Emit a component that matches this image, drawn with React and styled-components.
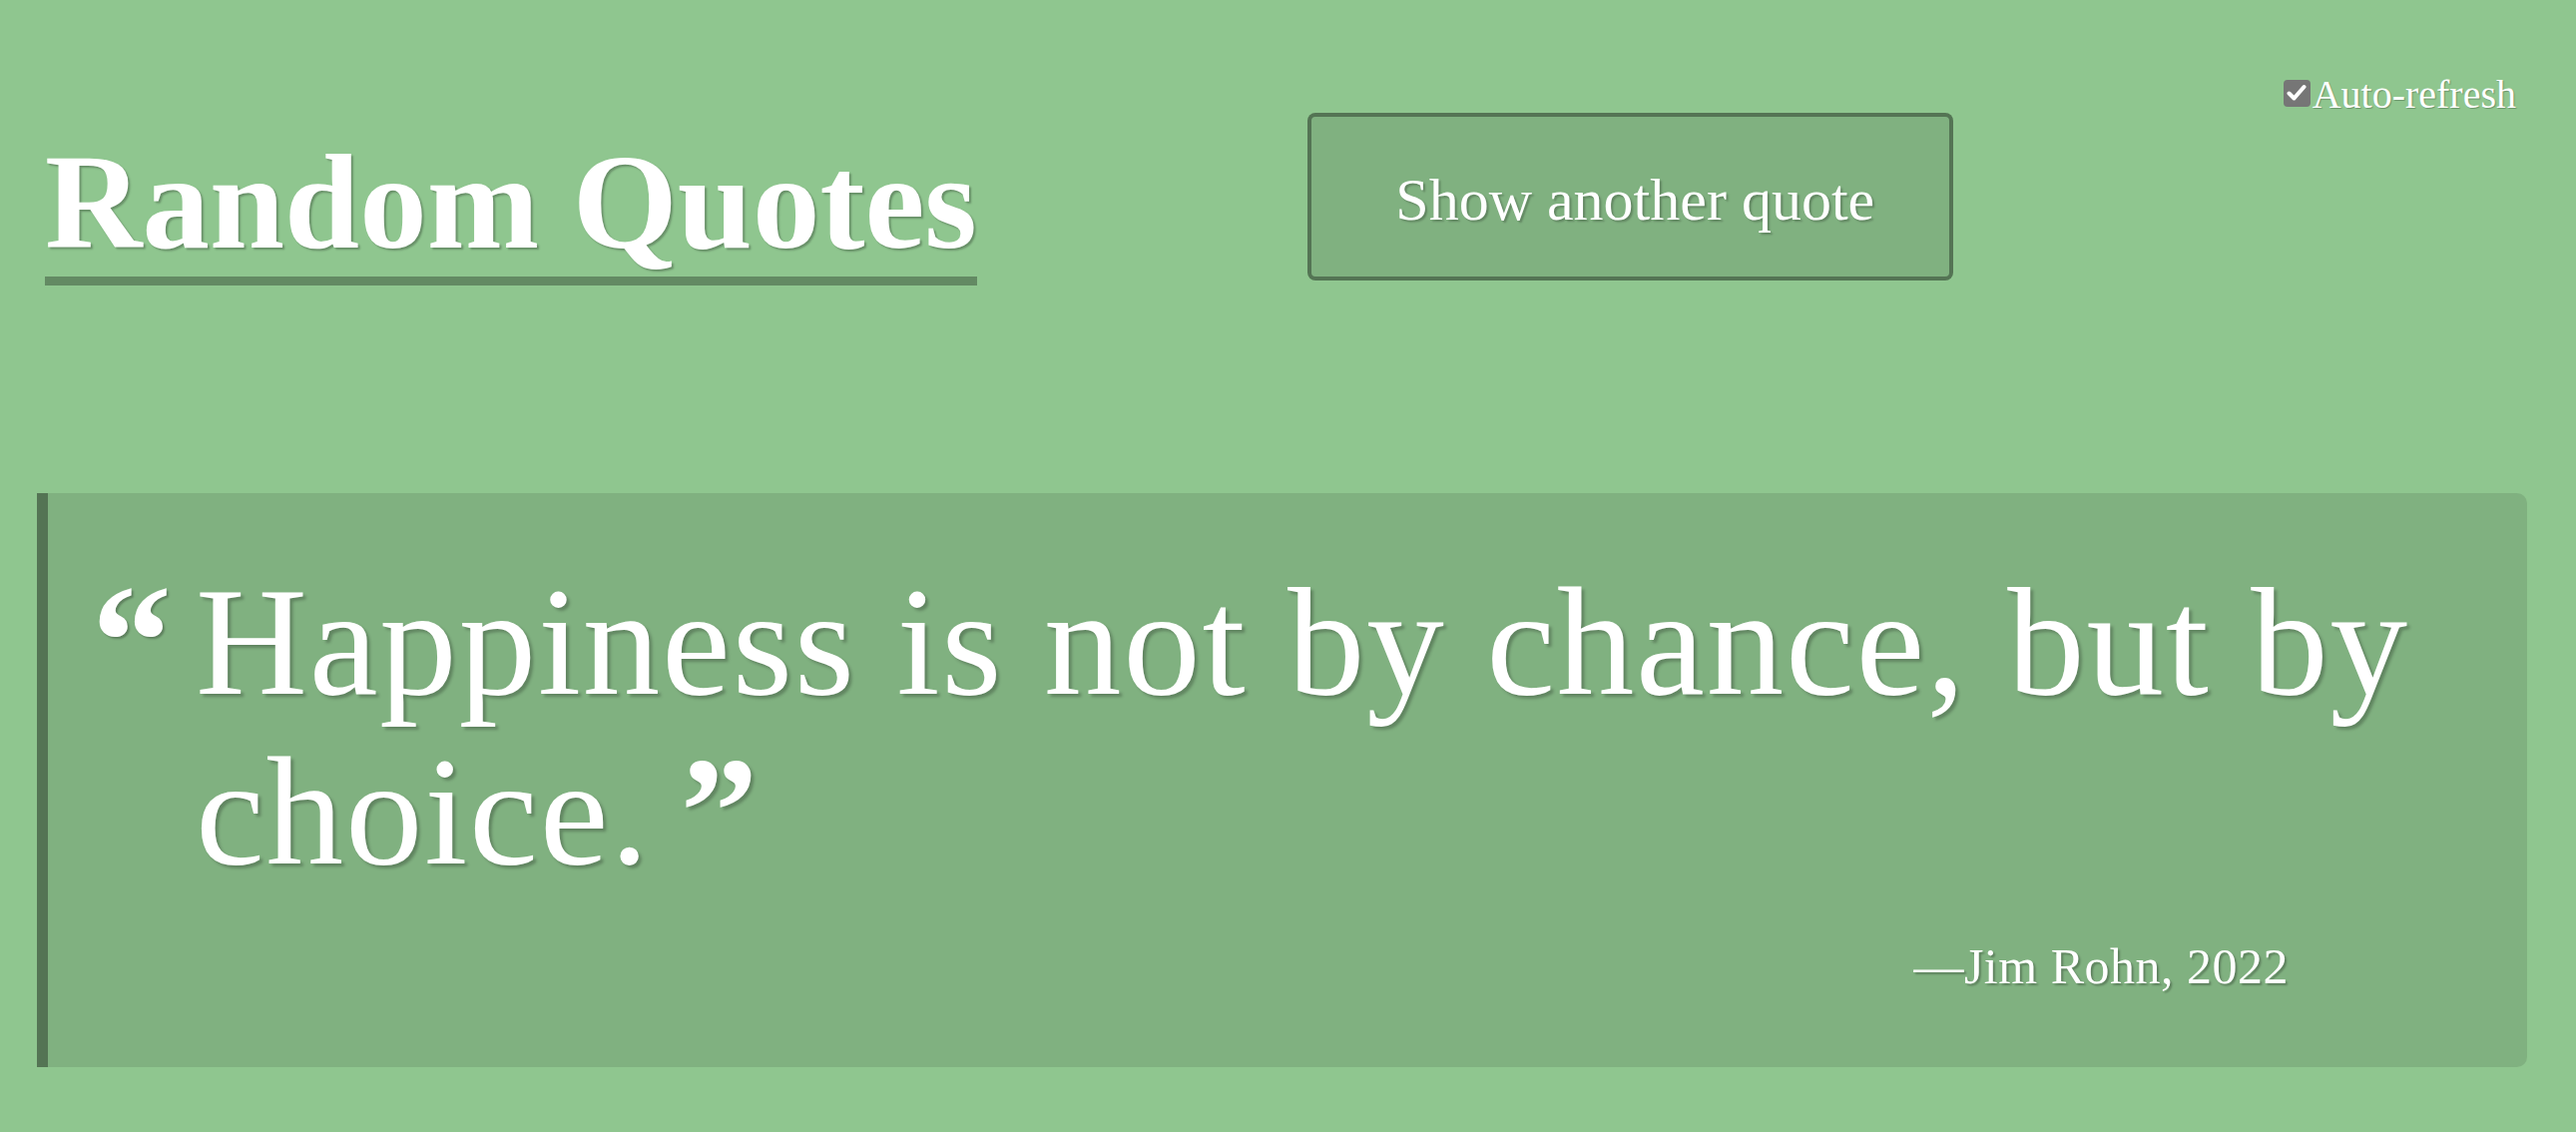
import React from "react";
import styled, { createGlobalStyle } from "styled-components";

const Global = createGlobalStyle`
  html, body { margin: 0; padding: 0; }
  body {
    background: #8fc68f;
    font-family: "Liberation Serif", "Times New Roman", serif;
    color: #ffffff;
    min-height: 1134px;
  }
`;

const Page = styled.div`
  width: 2581px;
  min-height: 1134px;
  box-sizing: border-box;
  padding: 0 49px 0 37px;
`;

const Header = styled.header`
  display: flex;
  justify-content: space-between;
  align-items: flex-start;
  padding: 0 11px 0 8px;
  height: 494px;
`;

const Title = styled.h1`
  margin: 136px 0 0 0;
  font-size: 135px;
  line-height: 134px;
  font-weight: 700;
  padding-bottom: 7px;
  border-bottom: 9px solid rgba(0, 0, 0, 0.3);
  text-shadow: 2px 2px 2px rgba(0, 0, 0, 0.28);
  white-space: nowrap;
`;

const Button = styled.button`
  margin-top: 113px;
  width: 647px;
  height: 168px;
  box-sizing: border-box;
  padding: 6px 0 0 10px;
  background: rgba(0, 0, 0, 0.1);
  border: 4px solid rgba(0, 0, 0, 0.35);
  border-radius: 8px;
  color: #fff;
  font-family: inherit;
  font-size: 60px;
  text-shadow: 2px 2px 2px rgba(0, 0, 0, 0.25);
  cursor: pointer;
`;

const Toggle = styled.label`
  margin-top: 72px;
  display: flex;
  align-items: center;
  font-size: 40px;
  line-height: 46px;
  text-shadow: 1px 1px 1px rgba(0, 0, 0, 0.25);
  white-space: nowrap;
`;

const Box = styled.span`
  width: 27px;
  height: 27px;
  border-radius: 4px;
  background: #767676;
  display: inline-flex;
  align-items: center;
  justify-content: center;
  margin-right: 2px;
  margin-top: -4px;
`;

const Card = styled.section`
  background: rgba(0, 0, 0, 0.1);
  border-left: 11px solid rgba(0, 0, 0, 0.35);
  border-radius: 0 10px 10px 0;
  padding: 64px 40px 72px 44px;
  height: 575px;
  box-sizing: border-box;
`;

const QuoteRow = styled.blockquote`
  margin: 0;
  display: flex;
  align-items: flex-start;
`;

const OpenMark = styled.span`
  flex: 0 0 104px;
  font-size: 160px;
  line-height: 170px;
  font-weight: 700;
  text-shadow: 2px 2px 2px rgba(0, 0, 0, 0.28);
`;

const QuoteText = styled.p`
  margin: 0;
  font-size: 155px;
  line-height: 170px;
  letter-spacing: 1.8px;
  text-shadow: 3px 3px 3px rgba(0, 0, 0, 0.25);

  &::after {
    content: "\u201D";
    font-weight: 700;
    margin-left: 30px;
  }
`;

const Author = styled.p`
  margin: 40px 199px 0 0;
  text-align: right;
  font-size: 50px;
  line-height: 60px;
  letter-spacing: 0.5px;
  text-shadow: 2px 2px 2px rgba(0, 0, 0, 0.28);
`;

export default function App() {
  return (
    <>
      <Global />
      <Page>
        <Header>
          <Title>Random Quotes</Title>
          <Button>Show another quote</Button>
          <Toggle>
            <Box>
              <svg width="20" height="18" viewBox="0 0 20 18">
                <path d="M2.5 9.5 L7.5 14.5 L17.5 3" fill="none" stroke="#fff" strokeWidth="4" strokeLinecap="round" strokeLinejoin="round" />
              </svg>
            </Box>
            Auto-refresh
          </Toggle>
        </Header>
        <Card>
          <QuoteRow>
            <OpenMark>{"\u201C"}</OpenMark>
            <QuoteText>Happiness is not by chance, but by choice.</QuoteText>
          </QuoteRow>
          <Author>—Jim Rohn, 2022</Author>
        </Card>
      </Page>
    </>
  );
}
